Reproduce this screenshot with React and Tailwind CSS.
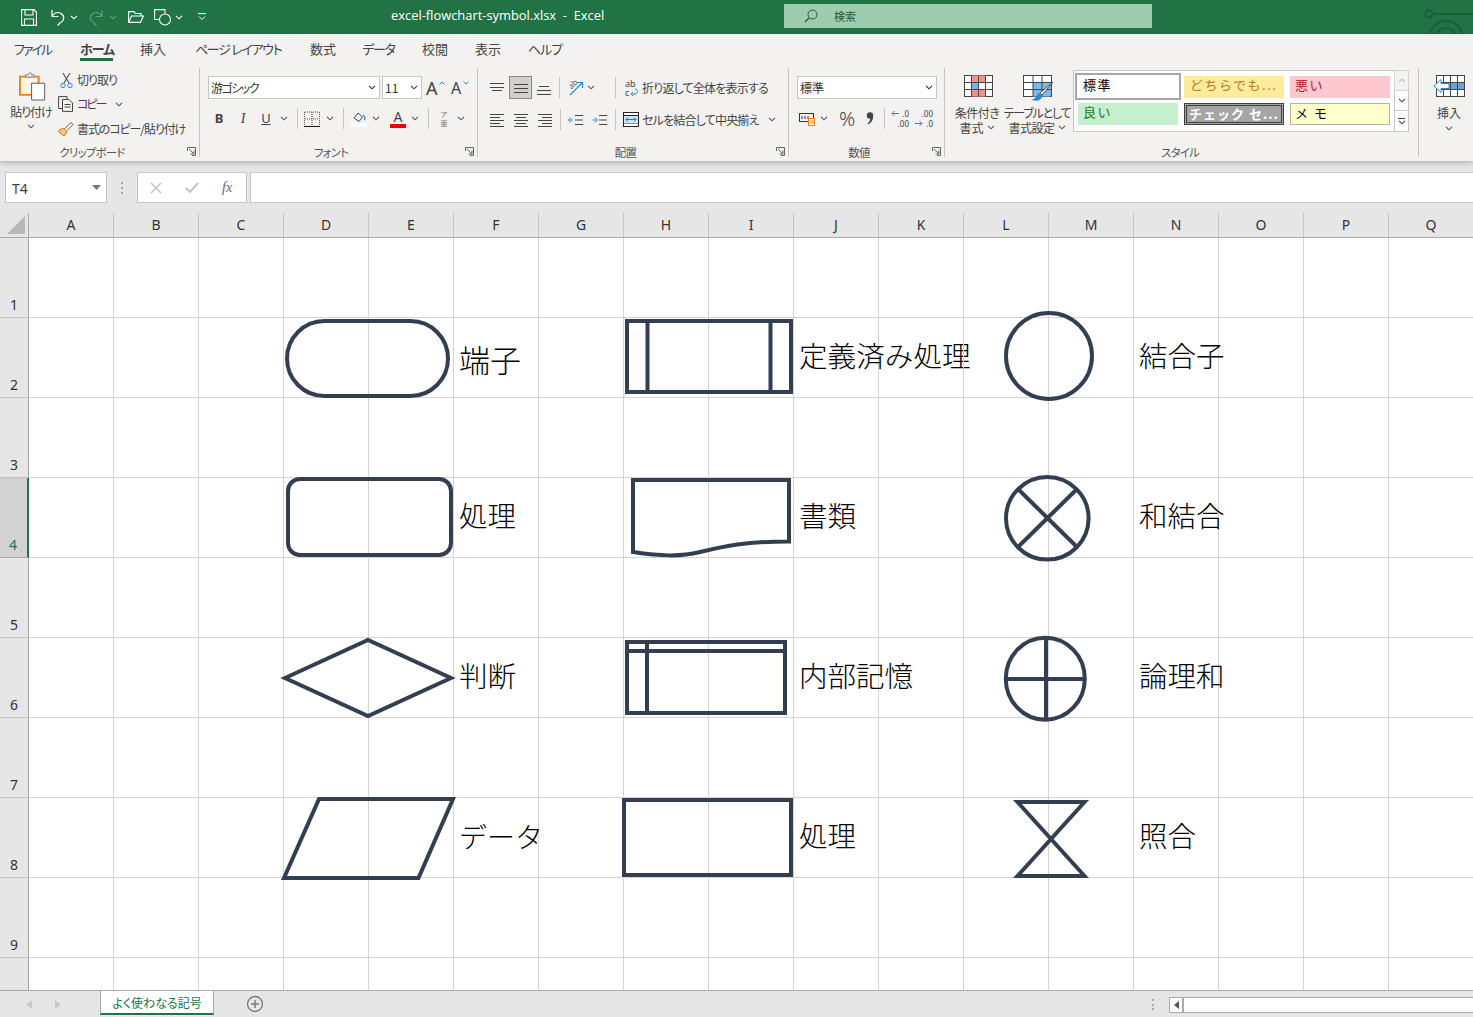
import React from 'react';

const Chev = ({ c = '#555', className = '' }) => (
  <svg width="8" height="5" viewBox="0 0 8 5" className={'shrink-0 ' + className}><path d="M1 .8l3 3 3-3" stroke={c} strokeWidth="1.1" fill="none" /></svg>
);
const Sep = ({ className = '' }) => <div className={'w-px h-[21px] bg-[#c8c6c4] shrink-0 ' + className} />;
const Launcher = () => (
  <svg width="9" height="9" viewBox="0 0 9 9" className="shrink-0 mr-[3px] mb-[1px]"><path d="M.5 4V.5H8.500V8.500H5" stroke="#666" fill="none" /><path d="M2 2l5 5M3.500 7H7V3.500" stroke="#666" fill="none" /></svg>
);
const Lines = ({ rows, c = '#444' }) => (
  <svg width="16" height="14" viewBox="0 0 16 14" className="shrink-0">{rows.map((r, i) => <path key={i} d={`M${r[0]} ${r[2]}.5H${r[1]}`} stroke={c} />)}</svg>
);

function Title() {
  return (
    <div className="h-[34px] bg-[#217346] flex items-center relative overflow-hidden shrink-0 text-white">
      <svg width="16" height="17" viewBox="0 0 16 17" className="ml-[21px] shrink-0"><path d="M.6.6H13L15.400 3V16.400H.6Z M4 .6V6H12V.6 M3.500 16.400V10H12.500V16.400" stroke="#fff" strokeWidth="1.1" fill="none" /></svg>
      <svg width="16" height="17" viewBox="0 0 16 17" className="ml-[13px] shrink-0"><path d="M2 1v6.500h6.500M2 7.500C4 3.500 8 2.500 11 4.500c4 2.500 3.500 7-1 9.500L7.500 16.500" stroke="#fff" strokeWidth="1.2" fill="none" /></svg>
      <Chev c="#fff" className="ml-[4px]" />
      <svg width="16" height="17" viewBox="0 0 16 17" className="ml-[10px] shrink-0"><path d="M14 1v6.500H7.500M14 7.500C12 3.500 8 2.500 5 4.500c-4 2.500-3.500 7 1 9.500l2.500 2.500" stroke="#5f9f7c" strokeWidth="1.2" fill="none" /></svg>
      <Chev c="#5f9f7c" className="ml-[5px]" />
      <svg width="16" height="12" viewBox="0 0 16 12" className="ml-[11px] shrink-0"><path d="M.6 11.400V.6H6L7.500 2.500H13V5M.6 11.400H12.500L15.400 5H3.500Z" stroke="#fff" strokeWidth="1.1" fill="none" /></svg>
      <svg width="18" height="17" viewBox="0 0 18 17" className="ml-[10px] shrink-0"><path d="M6 10.500H.6V.6H11V4.500" stroke="#fff" strokeWidth="1.1" fill="none" /><circle cx="11" cy="10.500" r="5.500" stroke="#fff" strokeWidth="1.100" fill="none" /></svg>
      <Chev c="#fff" className="ml-[3px]" />
      <svg width="8" height="8" viewBox="0 0 8 8" className="ml-[15px] shrink-0"><path d="M0 .6H8M1 3.500l3 3 3-3" stroke="#fff" fill="none" /></svg>
      <div className="ml-[185px] w-[214px] shrink-0 text-[12.900px] -mt-[2px] whitespace-pre [font-family:'Open_Sans','Noto_Sans',sans-serif]">excel-flowchart-symbol.xlsx  -  Excel</div>
      <div className="ml-[179px] w-[368px] h-[24px] -mt-[2px] bg-[#9fcbb1] flex items-center shrink-0 text-[#1d5c38]">
        <svg width="14" height="14" viewBox="0 0 14 14" className="ml-[20px]"><circle cx="8.500" cy="5.500" r="4.500" stroke="#1d5c38" fill="none" /><path d="M5 9l-4 4" stroke="#1d5c38" strokeWidth="1.200" /></svg>
        <span className="ml-[16px] text-[11px] [font-family:'Noto_Sans_CJK_JP',sans-serif]">検索</span>
      </div>
      <svg width="60" height="34" viewBox="0 0 60 34" className="absolute right-0 top-0"><g stroke="#1b5f3a" strokeWidth="2" fill="none"><circle cx="16" cy="14" r="3.500" /><path d="M20 14H60" /><circle cx="33" cy="38" r="17" /><circle cx="33" cy="38" r="10" /></g></svg>
    </div>
  );
}

const tabs = [
  { t: 'ファイル', c: 'ml-[14px] w-[37px] tracking-[-2px]' },
  { t: 'ホーム', c: 'ml-[29px] w-[33px] font-bold border-b-[3px] border-[#217346] tracking-[-1px]' },
  { t: '挿入', c: 'ml-[27px] w-[26px]' },
  { t: 'ページ レイアウト', c: 'ml-[29px] w-[86px] tracking-[-1.300px]' },
  { t: '数式', c: 'ml-[29px] w-[26px]' },
  { t: 'データ', c: 'ml-[26px] w-[33px] tracking-[-1.300px]' },
  { t: '校閲', c: 'ml-[27px] w-[26px]' },
  { t: '表示', c: 'ml-[27px] w-[26px]' },
  { t: 'ヘルプ', c: 'ml-[27px] w-[33px] tracking-[-1px]' },
];

function Tabs() {
  return (
    <div className="h-[34px] flex items-start pt-[6px] text-[13px] text-[#444] leading-[18px] shrink-0">
      {tabs.map((x) => <div key={x.t} className={'whitespace-pre h-[21px] text-center ' + x.c}>{x.t}</div>)}
    </div>
  );
}

function Group({ w, label, launcher = true, children }) {
  return (
    <div className={'h-[89px] border-r border-[#c8c6c4] flex flex-col shrink-0 ' + w}>
      <div className="flex-1 min-h-0">{children}</div>
      <div className="h-[14px] -mb-[2px] flex items-center text-[11.500px] text-[#555] leading-[14px] mt-[-1px] tracking-[-0.800px]">
        <div className="flex-1 text-center pr-[3px]">{label}</div>
        {launcher && <Launcher />}
      </div>
    </div>
  );
}

function Clipboard() {
  return (
    <Group w="w-[200px]" label="クリップボード">
      <div className="flex">
        <div className="w-[52px] ml-[5px] flex flex-col items-center shrink-0 pt-[3px]">
          <svg width="28" height="30" viewBox="0 0 30 31" className="ml-[4px]">
            <path d="M1 5.500H21V25H1Z" fill="#fff6e8" stroke="#e8820c" strokeWidth="2" />
            <path d="M7 6V3.500H10C10.500 .5 13 .5 13.500 3.500H16V6Z" fill="#f3f2f1" stroke="#777" />
            <path d="M13.500 12.500H27.500V30.500H13.500Z" fill="#fff" stroke="#555" />
          </svg>
          <div className="text-[12px] leading-[16px] mt-[3px] whitespace-nowrap text-[#444] tracking-[-1px]">貼り付け</div>
          <Chev className="mt-[4px]" />
        </div>
        <div className="flex flex-col text-[12px] leading-[16px] text-[#444]">
          <div className="flex items-center h-[16px] mt-[4px]">
            <svg width="13" height="17" viewBox="0 0 13 17" className="ml-[3px]"><path d="M3 1l6 10M10 1L4 11" stroke="#555" strokeWidth="1.200" /><circle cx="3" cy="13.500" r="2.200" stroke="#2b88d8" fill="none" /><circle cx="10" cy="13.500" r="2.200" stroke="#2b88d8" fill="none" /></svg>
            <span className="ml-[4px] whitespace-nowrap tracking-[-1px]">切り取り</span>
          </div>
          <div className="flex items-center h-[16px] mt-[8px]">
            <svg width="16" height="16" viewBox="0 0 16 16" className="ml-[1px]"><path d="M5 12.500H.6V.6H9V3" stroke="#444" fill="none" /><path d="M4.500 3.500H11L14.500 7V15.400H4.500Z M6.500 8.500H12.500M6.500 11H12.500" stroke="#444" fill="#f3f2f1" /></svg>
            <span className="ml-[3px] whitespace-nowrap tracking-[-2px]">コピー</span>
            <Chev className="ml-[10px]" />
          </div>
          <div className="flex items-center h-[16px] mt-[9px]">
            <svg width="16" height="16" viewBox="0 0 16 16" className="ml-[1px]"><path d="M1 9l5-2 3 4-3 4-5-4Z" fill="#f7c38a" stroke="#d9730d" /><path d="M7 7.500l6-6 2 2-6 6" fill="#fff" stroke="#555" /></svg>
            <span className="ml-[3px] whitespace-nowrap tracking-[-1.100px]">書式のコピー/貼り付け</span>
          </div>
        </div>
      </div>
    </Group>
  );
}

const Select = ({ w, text, t = '' }) => (
  <div className={'h-[23px] bg-white border border-[#c6c6c6] flex items-center justify-between pl-[2px] pr-[3px] text-[12px] text-[#333] shrink-0 ' + w}>
    <span className={'whitespace-nowrap ' + t}>{text}</span>
    <Chev c="#333" />
  </div>
);

function Font() {
  return (
    <Group w="w-[278px]" label="フォント">
      <div className="flex items-center pt-[8px] pl-[8px]">
        <Select w="w-[172px]" text="游ゴシック" t="tracking-[-1.500px]" />
        <Select w="w-[40px] ml-[2px]" text="11" />
        <div className="ml-[4px] w-[18px] text-[18px] leading-[22px] text-[#444] relative [font-family:'Noto_Sans',sans-serif]">A<svg width="6" height="4" viewBox="0 0 6 4" className="absolute -right-[1px] top-[4px]"><path d="M.5 3.500l2.500-2.500 2.500 2.500" stroke="#2b88d8" fill="none" /></svg></div>
        <div className="ml-[7px] w-[18px] text-[16px] leading-[22px] text-[#444] relative [font-family:'Noto_Sans',sans-serif]">A<svg width="6" height="4" viewBox="0 0 6 4" className="absolute right-0 top-[4px]"><path d="M.5.500l2.500 2.500 2.500-2.500" stroke="#2b88d8" fill="none" /></svg></div>
      </div>
      <div className="flex items-center mt-[8px] h-[23px] text-[#444] [font-family:'Liberation_Serif',serif]">
        <div className="ml-[11px] w-[16px] text-center text-[13px] font-bold [font-family:'Noto_Sans',sans-serif]">B</div>
        <div className="ml-[8px] w-[16px] text-center text-[14px] italic">I</div>
        <div className="ml-[7px] w-[16px] text-center text-[13px] underline [font-family:'Noto_Sans',sans-serif]">U</div>
        <Chev className="ml-[6px]" />
        <Sep className="ml-[9px]" />
        <svg width="16" height="16" viewBox="0 0 16 16" className="ml-[6px] shrink-0"><path d="M.5 1V15M15.500 1V15M8 1V15M1 8H15M1 1H15" stroke="#555" strokeDasharray="1 1" fill="none" /><path d="M0 15.500H16" stroke="#111" /></svg>
        <Chev className="ml-[6px]" />
        <Sep className="ml-[9px]" />
        <svg width="16" height="17" viewBox="0 0 16 17" className="ml-[7px] shrink-0"><path d="M3 8l4-5 4.500 4-3.500 4.500Z" stroke="#444" fill="none" /><path d="M12 5c2 1.500 2 4 1.500 5" stroke="#2b88d8" strokeWidth="1.500" fill="none" /><rect x="0" y="13" width="16" height="4" fill="#fff" /></svg>
        <Chev className="ml-[5px]" />
        <div className="ml-[10px] w-[16px] flex flex-col items-center shrink-0">
          <span className="text-[14px] leading-[14px] [font-family:'Noto_Sans',sans-serif]">A</span>
          <div className="w-[16px] h-[4px] bg-[#f00000]" />
        </div>
        <Chev className="ml-[5px]" />
        <Sep className="ml-[9px]" />
        <div className="ml-[7px] w-[16px] flex flex-col items-center text-[7px] leading-[9px] text-[#777] shrink-0 [font-family:'Noto_Sans_CJK_JP',sans-serif]"><span>ア</span><span>亜</span></div>
        <Chev className="ml-[5px]" />
      </div>
    </Group>
  );
}

function Align() {
  return (
    <Group w="w-[311px]" label="配置">
      <div className="flex items-center mt-[8px] h-[23px]">
        <div className="ml-[11px]"><Lines rows={[[1, 15, 2], [1, 15, 6], [3, 13, 9]]} /></div>
        <div className="ml-[4px] w-[23px] h-[23px] bg-[#d2d0ce] border border-[#8a8886] flex items-center justify-center"><Lines rows={[[1, 15, 3], [1, 15, 7], [1, 15, 11]]} /></div>
        <div className="ml-[4px]"><Lines rows={[[3, 13, 5], [1, 15, 9], [1, 15, 13]]} /></div>
        <Sep className="ml-[7px]" />
        <div className="ml-[8px] w-[16px] h-[16px] relative shrink-0">
          <span className="absolute left-0 top-0 text-[8px] leading-[8px] -rotate-45 text-[#555] [font-family:'Noto_Sans',sans-serif]">ab</span>
          <svg width="16" height="16" viewBox="0 0 16 16" className="absolute left-0 top-0"><path d="M2 15L14 3M9 2.500h5.500V8" stroke="#2b88d8" strokeWidth="1.200" fill="none" /></svg>
        </div>
        <Chev className="ml-[3px]" />
        <Sep className="ml-[20px]" />
        <div className="ml-[9px] w-[15px] shrink-0 text-[9px] text-[#444] [font-family:'Noto_Sans',sans-serif]">
          <div className="leading-[9px]">ab</div>
          <div className="flex items-center leading-[9px]">c<svg width="9" height="8" viewBox="0 0 9 8" className="ml-px"><path d="M1 6h4c3.500 0 3.500-5 0-5M3 4L1 6l2 2" stroke="#2b88d8" fill="none" /></svg></div>
        </div>
        <span className="ml-[2px] text-[12px] text-[#444] whitespace-nowrap tracking-[-0.800px]">折り返して全体を表示する</span>
      </div>
      <div className="flex items-center mt-[9px] h-[23px]">
        <div className="ml-[11px]"><Lines rows={[[1, 15, 1], [1, 11, 4], [1, 15, 7], [1, 11, 10], [1, 15, 13]]} /></div>
        <div className="ml-[8px]"><Lines rows={[[1, 15, 1], [3, 13, 4], [1, 15, 7], [3, 13, 10], [1, 15, 13]]} /></div>
        <div className="ml-[8px]"><Lines rows={[[1, 15, 1], [5, 15, 4], [1, 15, 7], [5, 15, 10], [1, 15, 13]]} /></div>
        <Sep className="ml-[7px]" />
        <svg width="16" height="14" viewBox="0 0 16 14" className="ml-[7px] shrink-0"><path d="M7 2.500H15M7 7H15M7 11.500H15" stroke="#444" /><path d="M5 7H.6M3 4.500L.6 7 3 9.500" stroke="#2b88d8" fill="none" /></svg>
        <svg width="16" height="14" viewBox="0 0 16 14" className="ml-[8px] shrink-0"><path d="M7 2.500H15M7 7H15M7 11.500H15" stroke="#444" /><path d="M.6 7H5M3 4.500L5.400 7 3 9.500" stroke="#2b88d8" fill="none" /></svg>
        <Sep className="ml-[7px]" />
        <svg width="16" height="15" viewBox="0 0 16 15" className="ml-[7px] shrink-0"><rect x=".5" y=".5" width="15" height="14" fill="#fff" stroke="#222" /><path d="M.5 3.500H15.500M.5 11H15.500" stroke="#222" /><rect x="1" y="4" width="14" height="7" fill="#cfe6f7" /><path d="M3 7.500H13M5 5.500L3 7.500 5 9.500M11 5.500L13 7.500 11 9.500" stroke="#1a7ac4" fill="none" /></svg>
        <span className="ml-[3px] text-[12px] text-[#444] whitespace-nowrap tracking-[-0.800px]">セルを結合して中央揃え</span>
        <Chev className="ml-[9px]" />
      </div>
    </Group>
  );
}

function NumberG() {
  return (
    <Group w="w-[156px]" label="数値">
      <div className="pt-[8px] pl-[8px]"><Select w="w-[140px]" text="標準" /></div>
      <div className="flex items-center mt-[8px] h-[23px] text-[#444]">
        <svg width="17" height="15" viewBox="0 0 17 15" className="ml-[10px] shrink-0"><rect x=".5" y="2.500" width="14" height="8" fill="none" stroke="#333" /><path d="M3 5v3M6 5v3M9 5v3" stroke="#333" /><rect x="9.500" y="7.500" width="6" height="7" fill="#fff" stroke="#e8820c" /><path d="M9.500 10H15.500M9.500 12H15.500" stroke="#e8820c" /></svg>
        <Chev className="ml-[4px]" />
        <span className="ml-[8px] w-[22px] text-center text-[20px] leading-[20px] font-light [font-family:'Noto_Sans',sans-serif]">%</span>
        <svg width="8" height="13" viewBox="0 0 8 13" className="ml-[8px] shrink-0"><circle cx="4" cy="3.500" r="3.200" fill="#444" /><path d="M7 3.500C7.500 8 5 11 2 12.500L1.500 11.500C3.500 10 4.500 8 4.500 5Z" fill="#444" /></svg>
        <Sep className="ml-[10px]" />
        <div className="ml-[6px] w-[18px] shrink-0 flex flex-col gap-[2px] text-[8px] leading-[8px] text-[#444] [font-family:'Noto_Sans',sans-serif]">
          <div className="flex items-center justify-between"><svg width="8" height="7" viewBox="0 0 8 7"><path d="M8 3.500H1M3.500 1L1 3.500 3.500 6" stroke="#2b88d8" fill="none" /></svg>.0</div>
          <div className="text-right">.00</div>
        </div>
        <div className="ml-[6px] w-[18px] shrink-0 flex flex-col gap-[2px] text-[8px] leading-[8px] text-[#444] [font-family:'Noto_Sans',sans-serif]">
          <div className="text-right">.00</div>
          <div className="flex items-center justify-between"><svg width="8" height="7" viewBox="0 0 8 7"><path d="M0 3.500H7M4.500 1L7 3.500 4.500 6" stroke="#2b88d8" fill="none" /></svg>.0</div>
        </div>
      </div>
    </Group>
  );
}

const GridIcon = ({ children, className = '' }) => (
  <svg width="30" height="23" viewBox="0 0 30 23" className={className}>
    <rect x=".5" y=".5" width="28" height="21" fill="#fff" stroke="#444" />
    {children}
    <path d="M7.500.5V21.500M14.500.5V21.500M21.500.5V21.500M.5 7.500H28.500M.5 14.500H28.500" stroke="#444" fill="none" />
  </svg>
);

function Styles() {
  return (
    <Group w="w-[474px]" label="スタイル" launcher={false}>
      <div className="flex items-start pt-[2px]">
        <div className="ml-[6px] w-[52px] flex flex-col items-center text-[12px] leading-[15px] text-[#444] shrink-0 pt-[5px]">
          <GridIcon className="ml-[3px]">
            <rect x="7.500" y=".5" width="14" height="7" fill="#ff8f8f" />
            <rect x="7.500" y="7.500" width="7" height="7" fill="#75b4ea" />
            <rect x="7.500" y="14.500" width="14" height="7" fill="#ff8f8f" />
          </GridIcon>
          <div className="mt-[7px] whitespace-nowrap tracking-[-0.500px]">条件付き</div>
          <div className="flex items-center gap-[3px] whitespace-nowrap">書式<Chev /></div>
        </div>
        <div className="ml-px w-[66px] flex flex-col items-center text-[12px] leading-[15px] text-[#444] shrink-0 pt-[5px]">
          <svg width="32" height="28" viewBox="0 0 32 28" className="-mb-[5px] ml-[4px]">
            <rect x=".5" y=".5" width="28" height="21" fill="#fff" stroke="#444" />
            <rect x="10" y="7.500" width="18" height="14" fill="#7db9ee" />
            <path d="M10 .5V21.500M19 .5V21.500M.5 7.500H28.500M.5 14.500H28.500" stroke="#444" fill="none" />
            <path d="M30 7L19 20l-2-2Z" fill="#fff" stroke="#555" />
            <path d="M16 18c-2 0-2 6-8 7 6 2 11 0 11-4Z" fill="#2b88d8" />
          </svg>
          <div className="mt-[7px] whitespace-nowrap tracking-[-1.200px]">テーブルとして</div>
          <div className="flex items-center gap-[3px] whitespace-nowrap tracking-[-0.500px]">書式設定<Chev /></div>
        </div>
        <div className="ml-[3px] w-[336px] h-[62px] bg-white border border-[#c8c6c4] flex shrink-0 [font-feature-settings:normal] text-[13px] tracking-[1.500px]">
          <div className="w-[320px] shrink-0">
            <div className="flex items-center pt-[2px] pl-px">
              <div className="w-[106px] h-[27px] border-2 border-[#a6a6a6] pl-[6px] leading-[19px] text-black shrink-0">標準</div>
              <div className="w-[100px] h-[22px] ml-[3px] bg-[#ffeb9c] text-[#b4792a] pl-[6px] leading-[18px] shrink-0 whitespace-nowrap overflow-hidden">どちらでも...</div>
              <div className="w-[100px] h-[22px] ml-[6px] bg-[#ffc7ce] text-[#b0202a] pl-[5px] leading-[18px] shrink-0">悪い</div>
            </div>
            <div className="flex items-center mt-[3px] pl-[4px]">
              <div className="w-[100px] h-[22px] bg-[#c6efce] text-[#1f7a1f] pl-[5px] leading-[18px] shrink-0">良い</div>
              <div className="w-[100px] h-[22px] ml-[6px] bg-[#a5a5a5] border-[3px] border-double border-[#3f3f3f] text-white font-bold pl-[2px] leading-[15px] shrink-0 whitespace-nowrap overflow-hidden tracking-[1px]">チェック セ...</div>
              <div className="w-[100px] h-[22px] ml-[6px] bg-[#ffffcc] border border-[#b2b2b2] text-black pl-[4px] leading-[17px] shrink-0">メ モ</div>
            </div>
          </div>
          <div className="flex flex-col w-[15px] ml-auto -my-px -mr-px">
            <div className="h-[21px] border border-[#d6d4d2] bg-[#f3f2f1] flex items-center justify-center"><Chev c="#bbb" className="rotate-180" /></div>
            <div className="h-[19px] border-x border-[#c8c6c4] bg-white flex items-center justify-center"><Chev c="#444" /></div>
            <div className="h-[22px] border border-[#c8c6c4] bg-white flex flex-col items-center justify-center gap-px"><div className="w-[7px] h-px bg-[#444]" /><Chev c="#444" /></div>
          </div>
        </div>
      </div>
    </Group>
  );
}

function Insert() {
  return (
    <div className="w-[54px] flex flex-col items-center shrink-0 text-[12px] leading-[15px] text-[#444] pt-[7px] pl-[6px]">
      <svg width="32" height="23" viewBox="0 0 32 23">
        <rect x="3.500" y=".5" width="28" height="21" fill="#fff" stroke="#444" />
        <rect x="10" y="7.500" width="21" height="7" fill="#5ba7e6" />
        <path d="M10.500.5V21.500M17.500.5V21.500M24.500.5V21.500M3.500 7.500H31.500M3.500 14.500H31.500" stroke="#444" fill="none" />
        <path d="M1 11L8 4.500V8.500H16V13.500H8V17.500Z" fill="#fff" stroke="#2b88d8" />
      </svg>
      <div className="mt-[7px] whitespace-nowrap">挿入</div>
      <Chev className="mt-[6px]" />
    </div>
  );
}

function FormulaBar() {
  return (
    <div className="h-[52px] flex items-start pt-[11px] bg-[#e6e6e6] shrink-0">
      <div className="ml-[5px] w-[102px] h-[31px] bg-white border border-[#c6c6c6] flex items-center justify-between pl-[6px] pr-[5px] text-[14px] text-[#444] shrink-0 [font-family:'Noto_Sans',sans-serif]">
        <span className="mt-[2px]">T4</span>
        <svg width="9" height="5" viewBox="0 0 9 5"><path d="M0 0H9L4.500 5Z" fill="#777" /></svg>
      </div>
      <div className="ml-[14px] w-[2px] h-[12px] mt-[10px] flex flex-col justify-between items-center shrink-0">
        <div className="w-[2px] h-[2px] bg-[#aaa]" /><div className="w-[2px] h-[2px] bg-[#aaa]" /><div className="w-[2px] h-[2px] bg-[#aaa]" />
      </div>
      <div className="ml-[14px] w-[110px] h-[31px] bg-white border border-[#c6c6c6] flex items-center shrink-0">
        <svg width="12" height="12" viewBox="0 0 12 12" className="ml-[12px]"><path d="M1 1l10 10M11 1L1 11" stroke="#c4c4c4" strokeWidth="1.500" /></svg>
        <svg width="14" height="12" viewBox="0 0 14 12" className="ml-[23px]"><path d="M1 6l4 4 8-9" stroke="#c4c4c4" strokeWidth="2.200" fill="none" /></svg>
        <span className="ml-[23px] text-[14px] italic text-[#666] [font-family:'Liberation_Serif',serif]">fx</span>
      </div>
      <div className="ml-[3px] flex-1 h-[31px] bg-white border border-[#c6c6c6] border-r-0" />
    </div>
  );
}

const cols = 'ABCDEFGHIJKLMNOPQ'.split('');

function ColHeader() {
  return (
    <div className="h-[25px] flex bg-[#e6e6e6] border-b border-[#ababab] shrink-0 [font-family:'Noto_Sans',sans-serif]">
      <div className="w-[29px] h-full border-r border-[#ababab] flex items-end justify-end pr-[3px] pb-[3px] shrink-0">
        <svg width="18" height="18" viewBox="0 0 18 18"><path d="M18 0V18H0Z" fill="#b7b7b7" /></svg>
      </div>
      {cols.map((c) => <div key={c} className="w-[85px] h-full border-r border-[#c4c4c4] text-center text-[14px] leading-[24px] text-[#333] shrink-0">{c}</div>)}
    </div>
  );
}

const labels = {
  2: { F: ['端子', 'text-[31px] pt-[5px]'], J: ['定義済み処理', 'text-[28.600px]'], N: ['結合子', 'text-[28.500px]'] },
  4: { F: ['処理', 'text-[28.500px]'], J: ['書類', 'text-[28.500px]'], N: ['和結合', 'text-[28.500px]'] },
  6: { F: ['判断', 'text-[28.500px]'], J: ['内部記憶', 'text-[28.500px]'], N: ['論理和', 'text-[28.500px]'] },
  8: { F: ['データ', 'text-[28px]'], J: ['処理', 'text-[28.500px]'], N: ['照合', 'text-[28.500px]'] },
};
const rows = [1, 2, 3, 4, 5, 6, 7, 8, 9, 10];

const S = { stroke: '#333f50', strokeWidth: 4, fill: 'none', strokeLinejoin: 'miter' };

function Shapes() {
  return (
    <svg width="1473" height="752" viewBox="0 238 1473 752" className="absolute left-0 top-0 pointer-events-none">
      <g {...S}>
        <rect x="287" y="321" width="161" height="75" rx="37.500" />
        <rect x="288" y="479" width="163" height="76" rx="12" />
        <path d="M285 678L368 640 451 678 368 716Z" />
        <path d="M319 799H453L418.500 878H284Z" />
        <path d="M627 321H791V392H627Z M647.500 321V392M770.500 321V392" />
        <path d="M633 480H789V541.500C745 541.500 725 546 700 552C680 557 660 556 633 552Z" />
        <path d="M627 642H785V713H627Z M627 651H785M647 642V713" />
        <path d="M624 800H791V875H624Z" />
        <circle cx="1049" cy="356" r="43" />
        <ellipse cx="1047.300" cy="518.300" rx="41.300" ry="41.300" />
        <path d="M1018 489L1077 547M1077 489L1018 547" />
        <ellipse cx="1045.300" cy="678.700" rx="39.500" ry="41" />
        <path d="M1046 638V720M1006 679H1085" />
        <path d="M1017.500 802H1084.500L1017.500 876H1084.500Z" />
      </g>
    </svg>
  );
}

function Sheet() {
  return (
    <div className="flex-1 min-h-0 relative overflow-hidden bg-white">
      <div className="grid grid-cols-[29px_repeat(17,85px)] auto-rows-[80px]">
        {rows.map((r) => (
          <React.Fragment key={r}>
            <div className={r === 4
              ? 'bg-[#d2d2d2] border-r-2 border-b border-r-[#217346] border-b-[#ababab] flex items-end justify-center pb-[2px] pr-[1px] text-[14px] leading-[20px] text-[#217346] [font-family:\'Noto_Sans\',sans-serif]'
              : 'bg-[#e6e6e6] border-r border-b border-r-[#a6a6a6] border-b-[#c0c0c0] flex items-end justify-center pb-[2px] text-[14px] leading-[20px] text-[#333] [font-family:\'Noto_Sans\',sans-serif]'}>{r < 10 ? r : ''}</div>
            {cols.map((c) => {
              const l = labels[r] && labels[r][c];
              return (
                <div key={c} className="border-r border-b border-[#d4d4d4] flex items-center pl-[5px] pb-[4px] min-w-0">
                  {l && <span className={'whitespace-nowrap font-light text-black leading-none [font-family:\'Noto_Sans_CJK_JP\',sans-serif] ' + l[1]}>{l[0]}</span>}
                </div>
              );
            })}
          </React.Fragment>
        ))}
      </div>
      <Shapes />
    </div>
  );
}

function TabBar() {
  return (
    <div className="h-[27px] bg-[#e6e6e6] border-t border-[#ababab] flex items-start shrink-0 overflow-hidden">
      <svg width="6" height="9" viewBox="0 0 6 9" className="ml-[26px] mt-[9px] shrink-0"><path d="M6 0V9L0 4.500Z" fill="#c8c8c8" /></svg>
      <svg width="6" height="9" viewBox="0 0 6 9" className="ml-[23px] mt-[9px] shrink-0"><path d="M0 0V9L6 4.500Z" fill="#c8c8c8" /></svg>
      <div className="ml-[39px] w-[114px] h-[25px] -mt-px bg-white border-x border-[#ababab] border-b-2 border-b-[#217346] text-center text-[12px] leading-[25px] text-[#217346] shrink-0 [font-feature-settings:'palt']">よく使わなる記号</div>
      <svg width="18" height="18" viewBox="0 0 18 18" className="ml-[32px] mt-[4px] shrink-0"><circle cx="9" cy="9" r="7.500" stroke="#7a7a7a" strokeWidth="1.300" fill="none" /><path d="M9 5V13M5 9H13" stroke="#7a7a7a" strokeWidth="1.500" /></svg>
      <div className="ml-[888px] mt-[8px] w-[2px] h-[11px] flex flex-col justify-between shrink-0">
        <div className="w-[2px] h-[2px] bg-[#aaa]" /><div className="w-[2px] h-[2px] bg-[#aaa]" /><div className="w-[2px] h-[2px] bg-[#aaa]" />
      </div>
      <div className="ml-[15px] mt-[6px] flex-1 h-[16px] bg-white border border-r-0 border-[#ababab] flex">
        <div className="w-[14px] border-r-2 border-[#ababab] flex items-center justify-center"><svg width="5" height="8" viewBox="0 0 5 8"><path d="M5 0V8L0 4Z" fill="#555" /></svg></div>
      </div>
    </div>
  );
}

export default function App() {
  return (
    <div className="w-[1473px] h-[1017px] overflow-hidden flex flex-col bg-[#e6e6e6] [font-family:'Noto_Sans_CJK_JP','Noto_Sans',sans-serif]">
      <Title />
      <div className="relative z-10 bg-[#f3f2f1] h-[127px] shrink-0 shadow-[0_2px_5px_rgba(0,0,0,0.22)] [font-feature-settings:'palt']">
        <Tabs />
        <div className="flex">
          <Clipboard />
          <Font />
          <Align />
          <NumberG />
          <Styles />
          <Insert />
        </div>
      </div>
      <FormulaBar />
      <ColHeader />
      <Sheet />
      <TabBar />
    </div>
  );
}
